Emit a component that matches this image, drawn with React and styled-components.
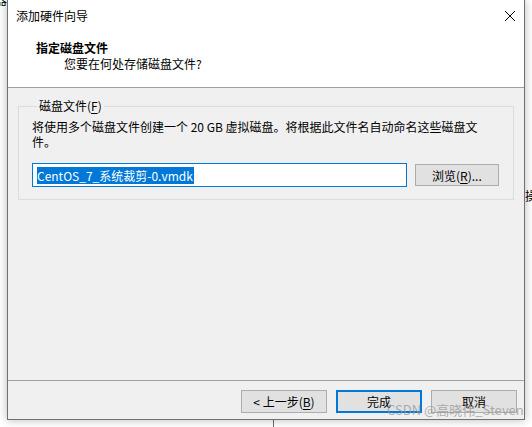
import React from 'react';
import styled, { createGlobalStyle } from 'styled-components';

const GlobalStyle = createGlobalStyle`
  html, body {
    margin: 0;
    padding: 0;
    background: #ffffff;
    font-family: "Noto Sans CJK SC", "Noto Sans", sans-serif;
    font-size: 12px;
    color: #000;
  }
`;

const Desk = styled.div`
  position: relative;
  width: 532px;
  height: 427px;
  overflow: hidden;
  background: #ffffff;
  padding-left: 7px;
  box-sizing: border-box;
`;

// bits of the window behind the dialog
const BackGlyph = styled.span`
  position: absolute;
  left: ${p => p.x}px;
  top: ${p => p.y}px;
  font-size: 12px;
  line-height: 12px;
  color: #000;
`;

const BackLine = styled.div`
  position: absolute;
  left: 273px;
  top: 412px;
  width: 1px;
  height: 20px;
  background: #6e6e6e;
`;

const Dialog = styled.div`
  position: relative;
  z-index: 1;
  width: 516px;
  height: 419px;
  display: flex;
  flex-direction: column;
  background: #f0f0f0;
  border: 1px solid #707070;
  border-top: none;
  box-shadow: 0 0 9px rgba(0, 0, 0, 0.28);
`;

const Header = styled.div`
  height: 87px;
  background: #ffffff;
  border-bottom: 1px solid #a0a0a0;
`;

const TitleBar = styled.div`
  height: 31px;
  display: flex;
  align-items: center;
  justify-content: space-between;
  padding: 0 8px 0 8px;
`;

const Title = styled.span`
  line-height: 16px;
  color: #000;
`;

const Heading = styled.div`
  padding-left: 28px;
  margin-top: 9px;
  font-weight: bold;
  line-height: 16px;
`;

const SubHeading = styled.div`
  padding-left: 56px;
  line-height: 16px;
`;

const Body = styled.div`
  flex: 1;
  padding: 10px 10px 0 10px;
`;

const Group = styled.fieldset`
  margin: 0;
  padding: 5px 14px 12px 13px;
  border: 1px solid #dcdcdc;
  min-width: 0;
`;

const Legend = styled.legend`
  margin-left: 5px;
  padding: 0 2px;
  line-height: 16px;
`;

const Hint = styled.div`
  line-height: 15px;
  width: 460px;
`;

const FileRow = styled.div`
  display: flex;
  align-items: center;
  gap: 8px;
  margin-top: 14px;
`;

const FileBox = styled.div`
  width: 372px;
  height: 22px;
  display: flex;
  align-items: center;
  padding-left: 4px;
  background: #ffffff;
  border: 1px solid #0078d7;
  font-size: 12px;
`;

const Selected = styled.span`
  background: #0078d7;
  color: #ffffff;
  line-height: 17px;
  padding-right: 1px;
`;

const Button = styled.button`
  width: ${p => p.w || 86}px;
  height: ${p => p.h || 23}px;
  box-sizing: border-box;
  margin: 0;
  padding: 0;
  font-family: inherit;
  font-size: 12px;
  color: #000;
  background: #e1e1e1;
  border: ${p => (p.primary ? '2px solid #0078d7' : '1px solid #adadad')};
`;

const Key = styled.span`
  text-decoration: underline;
  text-underline-offset: 2px;
`;

const Footer = styled.div`
  height: 39px;
  box-sizing: border-box;
  border-top: 1px solid #a0a0a0;
  display: flex;
  justify-content: flex-end;
  align-items: flex-start;
  gap: 9px;
  padding: 9px 7px 0 0;
`;

const Watermark = styled.div`
  position: absolute;
  z-index: 2;
  left: 387px;
  top: 402px;
  white-space: nowrap;
  font-size: 13px;
  line-height: 16px;
  color: rgba(150, 150, 150, 0.75);
  font-family: "Noto Sans CJK SC", "Noto Sans", sans-serif;
`;

const CloseIcon = () => (
  <svg width="12" height="12" viewBox="0 0 12 12">
    <path d="M1 1 L11 11 M11 1 L1 11" stroke="#000" strokeWidth="1" fill="none" />
  </svg>
);

export default function App() {
  return (
    <>
      <GlobalStyle />
      <Desk>
        <BackGlyph x={-5} y={-6}>器</BackGlyph>
        <BackGlyph x={525} y={190}>操</BackGlyph>
        <BackLine />
        <Dialog>
          <Header>
            <TitleBar>
              <Title>添加硬件向导</Title>
              <CloseIcon />
            </TitleBar>
            <Heading>指定磁盘文件</Heading>
            <SubHeading>您要在何处存储磁盘文件?</SubHeading>
          </Header>
          <Body>
            <Group>
              <Legend>
                磁盘文件(<Key>F</Key>)
              </Legend>
              <Hint>将使用多个磁盘文件创建一个 20 GB 虚拟磁盘。将根据此文件名自动命名这些磁盘文件。</Hint>
              <FileRow>
                <FileBox>
                  <Selected>CentOS_7_系统裁剪-0.vmdk</Selected>
                </FileBox>
                <Button w={85} h={22}>
                  浏览(<Key>R</Key>)...
                </Button>
              </FileRow>
            </Group>
          </Body>
          <Footer>
            <Button>
                &lt; 上一步(<Key>B</Key>)
            </Button>
            <Button primary>完成</Button>
            <Button>取消</Button>
          </Footer>
        </Dialog>
        <Watermark>CSDN @高晓伟_Steven</Watermark>
      </Desk>
    </>
  );
}
